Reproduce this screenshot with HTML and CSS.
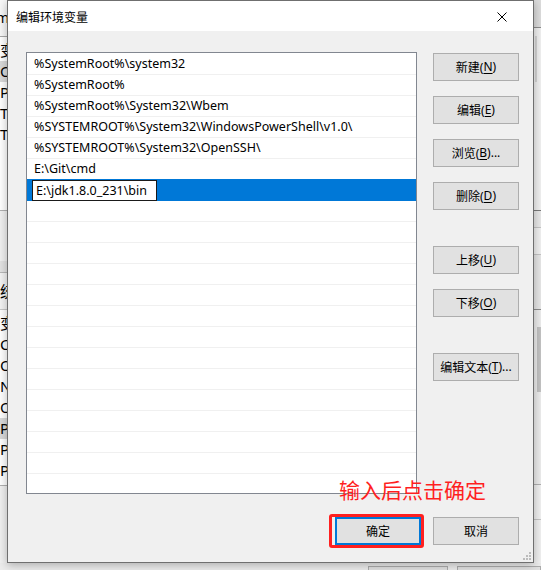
FILE: index.html
```html
<!DOCTYPE html>
<html lang="zh-CN">
<head>
<meta charset="utf-8">
<title>编辑环境变量</title>
<link rel="stylesheet" href="styles.css">
</head>
<body>
<div class="back-left">
  <div class="bl-top"><span>m</span></div>
  <div class="bl-list">
    <div class="bl-row">变</div>
    <div class="bl-row sel">Or</div>
    <div class="bl-row">Pa</div>
    <div class="bl-row">TE</div>
    <div class="bl-row">TM</div>
  </div>
  <div class="bl-gap"></div>
  <div class="bl-head"></div>
  <div class="bl-group">统</div>
  <div class="bl-list2">
    <div class="bl-row">变</div>
    <div class="bl-row">Co</div>
    <div class="bl-row">Or</div>
    <div class="bl-row">NI</div>
    <div class="bl-row">OS</div>
    <div class="bl-row sel">Pa</div>
    <div class="bl-row">PA</div>
    <div class="bl-row">PR</div>
  </div>
</div>

<div class="back-right">
  <div class="br-top"></div>
  <div class="br-a"><div class="br-scroll"></div></div>
  <div class="br-b"></div>
  <div class="br-c"></div>
  <div class="br-d"></div>
  <div class="br-e"><div class="br-thumb"></div></div>
  <div class="br-f"></div>
</div>

<div class="back-bottom">
  <div class="bb-btn"></div>
  <div class="bb-btn wide"></div>
</div>

<div class="dialog">
  <div class="titlebar">
    <span class="title">编辑环境变量</span>
    <svg class="close" width="10" height="10" viewBox="0 0 10 10"><path d="M0.5 0.5 L9.5 9.5 M9.5 0.5 L0.5 9.5" stroke="#000" stroke-width="1" fill="none"/></svg>
  </div>
  <div class="body">
    <div class="main">
      <div class="list">
        <div class="row">%SystemRoot%\system32</div>
        <div class="row">%SystemRoot%</div>
        <div class="row">%SystemRoot%\System32\Wbem</div>
        <div class="row">%SYSTEMROOT%\System32\WindowsPowerShell\v1.0\</div>
        <div class="row">%SYSTEMROOT%\System32\OpenSSH\</div>
        <div class="row">E:\Git\cmd</div>
        <div class="row selected"><span class="edit">E:\jdk1.8.0_231\bin</span></div>
        <div class="row"></div><div class="row"></div><div class="row"></div>
        <div class="row"></div><div class="row"></div><div class="row"></div>
        <div class="row"></div><div class="row"></div><div class="row"></div>
        <div class="row"></div><div class="row"></div><div class="row"></div>
        <div class="row"></div>
      </div>
      <div class="side">
        <div class="btn">新建(<u>N</u>)</div>
        <div class="btn">编辑(<u>E</u>)</div>
        <div class="btn">浏览(<u>B</u>)...</div>
        <div class="btn">删除(<u>D</u>)</div>
        <div class="btn far">上移(<u>U</u>)</div>
        <div class="btn">下移(<u>O</u>)</div>
        <div class="btn far">编辑文本(<u>T</u>)...</div>
      </div>
    </div>
    <div class="footer">
      <div class="btn ok">确定</div>
      <div class="btn">取消</div>
    </div>
  </div>
  <svg class="grip" width="8" height="8" viewBox="0 0 8 8">
    <rect x="6" y="0" width="2" height="2" fill="#bcbcbc"/>
    <rect x="3" y="3" width="2" height="2" fill="#bcbcbc"/>
    <rect x="6" y="3" width="2" height="2" fill="#bcbcbc"/>
    <rect x="0" y="6" width="2" height="2" fill="#bcbcbc"/>
    <rect x="3" y="6" width="2" height="2" fill="#bcbcbc"/>
    <rect x="6" y="6" width="2" height="2" fill="#bcbcbc"/>
  </svg>
</div>

<div class="note">输入后点击确定</div>
<div class="redbox"></div>
</body>
</html>
```

FILE: styles.css
```css
* { box-sizing: border-box; }

html, body {
  margin: 0;
  padding: 0;
}

body {
  width: 541px;
  height: 570px;
  overflow: hidden;
  position: relative;
  background: #f0f0f0;
  font-family: "Noto Sans", "Noto Sans CJK SC", sans-serif;
  font-size: 12px;
  color: #000;
}

/* ---------- background window pieces ---------- */
.back-left {
  position: absolute;
  left: 0;
  top: 0;
  width: 7px;
  height: 570px;
  overflow: hidden;
  background: #f0f0f0;
  display: flex;
  flex-direction: column;
  white-space: nowrap;
}
.bl-top {
  height: 37px;
  border-bottom: 1px solid #a8a8a8;
  padding-top: 8px;
  font-size: 14px;
  margin-left: -4px;
  background: #f7f7f7;
}
.bl-list {
  height: 174px;
  background: #fff;
  border-bottom: 1px solid #b0b0b0;
  padding-top: 3px;
  font-size: 15px;
}
.bl-row {
  height: 21px;
  line-height: 21px;
  padding-left: 0;
}
.bl-row.sel { background: #d9d9d9; }
.bl-gap { height: 50px; }
.bl-head { height: 12px; background: #e3e3e3; border-bottom: 1px solid #b8b8b8; }
.bl-group {
  height: 37px;
  line-height: 37px;
  font-size: 15px;
  border-bottom: 1px solid #c8c8c8;
  background: #f3f3f3;
}
.bl-list2 {
  height: 176px;
  background: #fff;
  border-bottom: 1px solid #b0b0b0;
  padding-top: 3px;
  font-size: 15px;
}
.bl-list2 .bl-row { height: 21px; }

.back-right {
  position: absolute;
  left: 534px;
  top: 0;
  width: 7px;
  height: 570px;
  background: #f0f0f0;
  display: flex;
  flex-direction: column;
}
.br-top { height: 28px; background: #dcdcdc; border-bottom: 1px solid #8c8c8c; }
.br-a { height: 183px; border-bottom: 1px solid #7a7a7a; padding-top: 8px; }
.br-scroll { width: 2px; height: 46px; background: #d4d4d4; margin-left: 1px; }
.br-b { height: 17px; border-bottom: 1px solid #c4c4c4; background: #e8e8e8; }
.br-c { height: 27px; border-bottom: 1px solid #c4c4c4; }
.br-d { height: 55px; border-bottom: 1px solid #8c8c8c; background: #e6e6e6; }
.br-e { height: 175px; border-bottom: 1px solid #b0b0b0; padding-top: 17px; background: #ececec; }
.br-thumb { width: 4px; height: 65px; margin-left: 3px; background: #c2c2c2; }
.br-f { height: 35px; border-bottom: 1px solid #c4c4c4; }

.back-bottom {
  position: absolute;
  left: 0;
  top: 563px;
  width: 541px;
  height: 7px;
  display: flex;
  padding-left: 368px;
  padding-top: 3px;
  gap: 9px;
  background: #ececec;
}
.bb-btn {
  width: 86px;
  height: 10px;
  background: #e1e1e1;
  border: 1px solid #adadad;
}
.bb-btn.wide { width: 90px; }

/* ---------- dialog ---------- */
.dialog {
  position: absolute;
  left: 7px;
  top: 0;
  width: 527px;
  height: 563px;
  border: 1px solid #6f6f6f;
  background: #f0f0f0;
  box-shadow: 0 2px 9px rgba(0, 0, 0, 0.28);
  display: flex;
  flex-direction: column;
}

.titlebar {
  height: 30px;
  background: #fff;
  display: flex;
  align-items: center;
  justify-content: space-between;
  padding-left: 8px;
  padding-right: 26px;
  flex-shrink: 0;
}
.title {
  font-family: "Noto Sans CJK SC", sans-serif;
  font-size: 12px;
  line-height: 16px;
  padding-top: 1px;
}
.close { display: block; margin-top: 1px; }

.body {
  flex: 1;
  padding: 21px 14px 0 18px;
  display: flex;
  flex-direction: column;
}

.main {
  display: flex;
  gap: 16px;
}

.list {
  width: 391px;
  height: 442px;
  background: #fff;
  border: 1px solid #828790;
  padding-top: 1px;
  overflow: hidden;
  font-size: 12.5px;
}
.row {
  height: 21px;
  line-height: 20px;
  border-bottom: 1px solid #f0f0f0;
  padding-left: 7px;
  white-space: nowrap;
}
.row.selected {
  background: #0078d7;
  border-bottom-color: #0078d7;
  padding-left: 5px;
  padding-top: 0;
  margin-top: -1px;
  height: 22px;
}
.edit {
  display: inline-block;
  width: 125px;
  height: 21px;
  margin-top: 1px;
  background: #fff;
  border: 1px solid #1a1a1a;
  padding-left: 3px;
  line-height: 19px;
}

.side {
  width: 86px;
  display: flex;
  flex-direction: column;
  gap: 15px;
  padding-top: 1px;
}
.btn {
  width: 86px;
  height: 28px;
  background: #e1e1e1;
  border: 1px solid #adadad;
  display: flex;
  align-items: center;
  justify-content: center;
  font-size: 12px;
  white-space: nowrap;
  padding-bottom: 1px;
}
.btn u { text-decoration: underline; text-underline-offset: 2px; }
.btn.far { margin-top: 21px; }

.footer {
  display: flex;
  justify-content: flex-end;
  gap: 12px;
  margin-top: 23px;
}
.btn.ok {
  border: 2px solid #0078d7;
}

.grip {
  position: absolute;
  right: 2px;
  bottom: 2px;
}

/* ---------- annotation overlay ---------- */
.note {
  position: absolute;
  left: 339px;
  top: 477px;
  font-family: "Noto Sans CJK SC", sans-serif;
  font-size: 21px;
  line-height: 24px;
  color: #ff1f1f;
  white-space: nowrap;
}
.redbox {
  position: absolute;
  left: 329px;
  top: 514px;
  width: 95px;
  height: 34px;
  border: 3px solid #ff2020;
  border-radius: 3px;
}
```
